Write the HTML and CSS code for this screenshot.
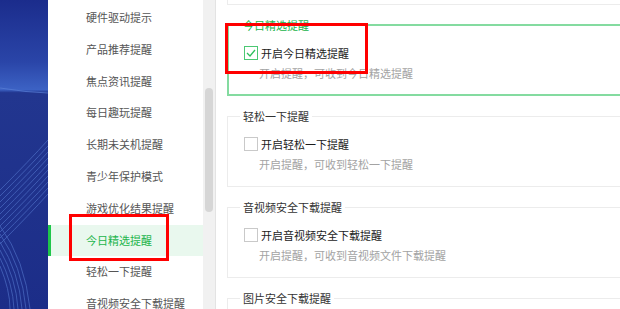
FILE: index.html
```html
<!DOCTYPE html>
<html lang="zh-CN">
  <head>
    <meta charset="UTF-8" />
    <meta name="viewport" content="width=device-width, initial-scale=1.0" />
    <title>消息提醒设置</title>
    <link rel="stylesheet" href="styles.css">
  </head>
  <body>
    <div class="desk">
      <svg width="48" height="309" viewBox="0 0 48 309">
        <defs>
          <linearGradient id="sky" x1="0" y1="0" x2="0" y2="1">
            <stop offset="0" stop-color="#1b2c8c"/>
            <stop offset="0.2" stop-color="#2a45a8"/>
            <stop offset="0.29" stop-color="#3c62c4"/>
            <stop offset="0.3" stop-color="#22368f"/>
            <stop offset="1" stop-color="#1c2d88"/>
          </linearGradient>
        </defs>
        <rect width="48" height="309" fill="url(#sky)"/>
        <path d="M0 88 Q24 92 48 93" stroke="#5a7fd6" stroke-width="1.2" fill="none" opacity="0.7"/>
        <g stroke="#5679cf" stroke-width="0.8" fill="none" opacity="0.75">
          <path d="M0 190 Q30 160 48 140"/>
          <path d="M0 196 Q30 166 48 146"/>
          <path d="M0 202 Q30 172 48 152"/>
          <path d="M0 208 Q30 178 48 158"/>
          <path d="M0 214 Q30 184 48 164"/>
          <path d="M0 220 Q30 190 48 170"/>
          <path d="M0 226 Q30 196 48 176"/>
          <path d="M0 232 Q30 202 48 182"/>
          <path d="M0 238 Q30 208 48 188"/>
          <path d="M0 244 Q30 214 48 194"/>
          <path d="M0 226 Q25 260 30 309"/>
          <path d="M0 234 Q22 266 26 309"/>
          <path d="M0 242 Q19 272 22 309"/>
          <path d="M0 250 Q16 278 18 309"/>
          <path d="M0 258 Q13 284 14 309"/>
          <path d="M0 266 Q10 290 10 309"/>
        </g>
      </svg>
    </div>

    <nav class="sidebar">
      <ul class="menu">
        <li>硬件驱动提示</li>
        <li>产品推荐提醒</li>
        <li>焦点资讯提醒</li>
        <li>每日趣玩提醒</li>
        <li>长期未关机提醒</li>
        <li>青少年保护模式</li>
        <li>游戏优化结果提醒</li>
        <li class="active">今日精选提醒</li>
        <li>轻松一下提醒</li>
        <li>音视频安全下载提醒</li>
      </ul>
    </nav>

    <div class="scrollbar"><div class="thumb"></div></div>

    <main class="content">
      <div class="prev-box"></div>

      <fieldset class="group on">
        <legend>今日精选提醒</legend>
        <label class="check-row">
          <span class="box checked">
            <svg width="10" height="8" viewBox="0 0 10 8"><polyline points="1,4 4,7 9,1" fill="none" stroke="#2fbf5d" stroke-width="1.3"/></svg>
          </span>
          开启今日精选提醒
        </label>
        <p class="desc">开启提醒，可收到今日精选提醒</p>
      </fieldset>

      <fieldset class="group">
        <legend>轻松一下提醒</legend>
        <label class="check-row"><span class="box"></span>开启轻松一下提醒</label>
        <p class="desc">开启提醒，可收到轻松一下提醒</p>
      </fieldset>

      <fieldset class="group">
        <legend>音视频安全下载提醒</legend>
        <label class="check-row"><span class="box"></span>开启音视频安全下载提醒</label>
        <p class="desc">开启提醒，可收到音视频文件下载提醒</p>
      </fieldset>

      <fieldset class="group">
        <legend>图片安全下载提醒</legend>
        <label class="check-row"><span class="box"></span>开启图片安全下载提醒</label>
        <p class="desc">开启提醒，可收到图片下载提醒</p>
      </fieldset>
    </main>

    <!-- red annotation boxes -->
    <div class="mark mark-menu"></div>
    <div class="mark mark-check"></div>
  </body>
</html>
```

FILE: styles.css
```css
* {
  margin: 0;
  padding: 0;
  box-sizing: border-box;
}

body {
  width: 620px;
  height: 309px;
  overflow: hidden;
  display: flex;
  position: relative;
  background: #fff;
  font-family: "Noto Sans CJK SC", "Microsoft YaHei", sans-serif;
  font-size: 11px;
}

.desk {
  width: 48px;
  flex: none;
  border-right: 1px solid #16226e;
}

.desk svg {
  display: block;
}

.sidebar {
  width: 155px;
  flex: none;
  background: #fff;
}

.menu {
  list-style: none;
  padding-top: 2px;
}

.menu li {
  height: 31.8px;
  line-height: 31.8px;
  padding-left: 38px;
  color: #555;
  white-space: nowrap;
}

.menu li.active {
  background: #e9f8ee;
  color: #22b54b;
  border-left: 3px solid #1fc64a;
  padding-left: 35px;
}

.scrollbar {
  width: 13px;
  flex: none;
  background: #f1f1f1;
  border-right: 1px solid #e3e3e3;
  padding: 88px 2px 0 2px;
}

.thumb {
  height: 124px;
  border-radius: 4px;
  background: #d6d6d6;
}

.content {
  flex: 1;
  overflow: hidden;
  padding-left: 11px;
}

.prev-box {
  width: 420px;
  height: 5px;
  border: 1px solid #ececec;
  border-top: none;
}

.group {
  width: 420px;
  margin-top: 12px;
  border: 1px solid #ececec;
  padding: 0 0 14px 12px;
}

.group legend {
  padding: 0 3px;
  line-height: 16px;
  color: #333;
}

.group.on {
  border: 2px solid #84dba0;
  padding: 0 0 13px 11px;
}

.group.on legend {
  color: #21b34a;
}

.check-row {
  display: flex;
  align-items: center;
  gap: 3px;
  margin: 13px 0 0 4px;
  height: 14px;
  color: #1c1c1c;
}

.box {
  width: 14px;
  height: 14px;
  border: 1px solid #c9c9c9;
  background: #fff;
  display: flex;
  align-items: center;
  justify-content: center;
}

.box.checked {
  border-color: #4cc873;
}

.desc {
  margin: 5px 0 0 19px;
  line-height: 16px;
  color: #a3a3a3;
}

.mark {
  position: absolute;
  border: 3px solid #f00;
}

.mark-menu {
  left: 69px;
  top: 214px;
  width: 100px;
  height: 47px;
}

.mark-check {
  left: 225px;
  top: 23px;
  width: 143px;
  height: 51px;
}
```
